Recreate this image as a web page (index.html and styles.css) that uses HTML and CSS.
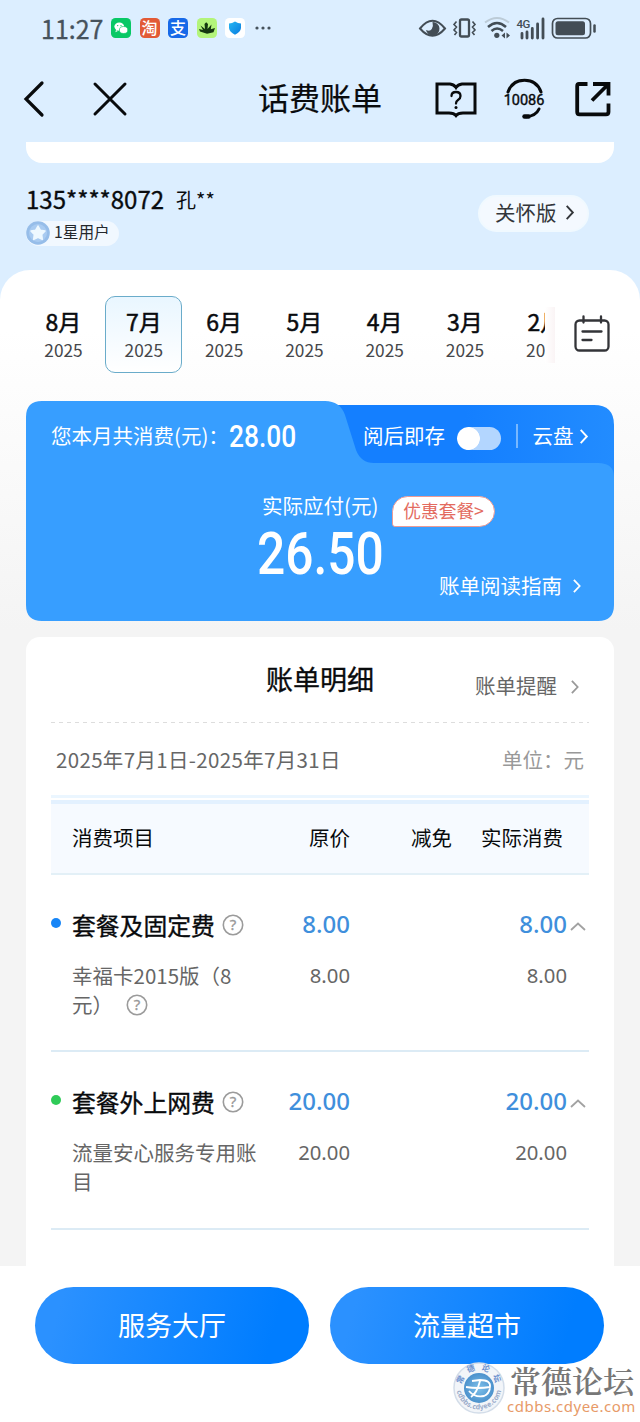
FILE: index.html
```html
<!DOCTYPE html>
<html lang="zh-CN">
<head>
<meta charset="utf-8">
<title>话费账单</title>
<link rel="stylesheet" href="styles.css">
</head>
<body>
<div class="page">
  <header class="status">
    <span class="clock">11:27</span>
    <div class="apps">
      <svg class="app" viewBox="0 0 20 20"><rect width="20" height="20" rx="4.5" fill="#08c865"/><ellipse cx="8.3" cy="8.6" rx="4.9" ry="4.2" fill="#fff"/><path d="M5 12l-.6 2.2 2.4-1.3z" fill="#fff"/><ellipse cx="12.6" cy="12" rx="4.2" ry="3.5" fill="#fff" stroke="#08c865" stroke-width=".7"/><circle cx="6.7" cy="7.6" r=".7" fill="#08c865"/><circle cx="10" cy="7.6" r=".7" fill="#08c865"/></svg>
      <span class="app app-tao">淘</span>
      <span class="app app-zhi">支</span>
      <svg class="app" viewBox="0 0 20 20"><rect width="20" height="20" rx="4.5" fill="#b3f47a"/><path d="M3 13.500L2 11l4 1-2.500-4.500L8 11l-.5-5 1.700-1.800L11 6l-.5 5 4-4.500-.7 4.800L18 10l-1.500 4.300-6.500 1.500z" fill="#14370f"/></svg>
      <svg class="app" viewBox="0 0 20 20"><defs><linearGradient id="shield" x2="1" y2="1"><stop stop-color="#29b8f2"/><stop offset="1" stop-color="#087be0"/></linearGradient></defs><rect width="20" height="20" rx="4.500" fill="#fff"/><path d="M10 3.500Q13 5.500 16 5.600V10Q15.500 14 10 16.800 4.500 14 4 10V5.600Q7 5.500 10 3.500z" fill="url(#shield)"/></svg>
    </div>
    <svg class="more" viewBox="0 0 16 4" fill="#46525c"><circle cx="2" cy="2" r="1.600"/><circle cx="8" cy="2" r="1.600"/><circle cx="14" cy="2" r="1.600"/></svg>
    <svg class="sys" viewBox="0 0 180 24" fill="none" stroke="#434d55">
      <path d="M1 12.500Q13.500-3 26 12.500 13.500 27 1 12.500z" stroke-width="2"/>
      <path d="M13.500 6a6.800 6.800 0 1 1-6.500 8q4 2 5.800-1t.7-7z" fill="#434d55" stroke="none"/>
      <rect x="41" y="3.500" width="9" height="17" rx="1.500" stroke-width="2.300"/>
      <path d="M37.500 5.500l-2.500 3 2.500 2.500-2.500 3 2.500 2.500-2 2.500M53.500 5.500l2.500 3-2.500 2.500 2.500 3-2.500 2.500 2 2.500" stroke-width="1.600"/>
      <path d="M66 6.500Q78-2.500 90 6.500" stroke="#bccbd7" stroke-width="2"/>
      <path d="M69 11Q78 3 87 11M72.500 15Q78 10 84 15" stroke-width="2.500"/>
      <circle cx="77.800" cy="19.300" r="2.600" fill="#434d55" stroke="none"/>
      <path d="M86 16.500l-3.500 3 3.500 3zM87.500 16.500l3.500 3-3.500 3z" fill="#434d55" stroke="none"/>
      <path d="M103 17.500V22M108 16V22M113.300 12.500V22M118.600 8V22M124 3V22" stroke-width="2.800" stroke-linecap="round"/>
      <text x="97.500" y="11.500" class="net">4G</text>
      <rect x="133.500" y="2.500" width="38" height="19.500" rx="5" stroke-width="1.700"/>
      <rect x="136.500" y="5.200" width="29.500" height="14" rx="2.500" fill="#434d55" stroke="none"/>
      <path d="M175.500 9.500v6" stroke-width="2.500" stroke-linecap="round"/>
    </svg>
  </header>

  <nav class="nav">
    <svg class="back" viewBox="0 0 20 36"><path d="M18 2L2 18l16 16" fill="none" stroke="#080a0c" stroke-width="3.200" stroke-linecap="round"/></svg>
    <svg class="close" viewBox="0 0 34 34"><path d="M2 2l30 30M32 2L2 32" stroke="#080a0c" stroke-width="3" stroke-linecap="round"/></svg>
    <h1 class="title">话费账单</h1>
    <svg class="book" viewBox="0 0 42 36" fill="none" stroke="#080a0c" stroke-width="3"><path d="M2 3H15Q19 3.500 21 6.500 23 3.500 27 3H40V32H28Q23 32 21 34.500 19 32 14 32H2z"/><path d="M16.500 15Q16.500 11 21 11T25.500 15Q25.500 17.500 23 19 21 20.300 21 22.500" stroke-width="2.300" stroke-linecap="round"/><circle cx="21" cy="26.500" r="1.500" fill="#080a0c" stroke="none"/></svg>
    <svg class="service" viewBox="0 0 42 42" fill="none" stroke="#080a0c" stroke-width="3"><path d="M4 14Q8 2.200 20.500 2.200T37 14M35 31Q32 38 22 38.700" stroke-linecap="round"/><path d="M20.500 38.500h4" stroke-width="4.500" stroke-linecap="round"/><text x="20" y="27" class="servnum">10086</text></svg>
    <svg class="share" viewBox="0 0 36 36" fill="none" stroke="#080a0c" stroke-width="3.800"><path d="M12.500 3H4Q2.200 3 2.200 5V31Q2.200 33.300 4.500 33.300H31Q33.500 33.300 33.500 31V22.500M18 3H33.500V14.500M33 3.500L17 19.500"/></svg>
  </nav>

  <div class="strip"></div>

  <section class="user">
    <div class="ident">
      <div class="phone">135****8072<span class="name">孔**</span></div>
      <div class="level"><svg class="star" viewBox="0 0 24 24"><circle cx="12" cy="12" r="11.800" fill="#96bde9"/><circle cx="12" cy="12" r="9" fill="#a9cbf1"/><path d="M12 5l2.300 4.200 4.700.9-3.300 3.500.6 4.800L12 16.400l-4.300 2 .6-4.800L5 10.100l4.700-.9z" fill="#eef8ff" stroke="#eef8ff" stroke-width="1.500" stroke-linejoin="round"/></svg><span>1星用户</span></div>
    </div>
    <div class="care">关怀版<svg class="chev" viewBox="0 0 10 18"><path d="M1.500 2L8 9l-6.500 7" fill="none" stroke="currentColor" stroke-width="2"/></svg></div>
  </section>

  <main class="sheet">
    <div class="months">
      <div class="track">
        <div class="month"><b>8月</b><span>2025</span></div>
        <div class="month on"><b>7月</b><span>2025</span></div>
        <div class="month"><b>6月</b><span>2025</span></div>
        <div class="month"><b>5月</b><span>2025</span></div>
        <div class="month"><b>4月</b><span>2025</span></div>
        <div class="month"><b>3月</b><span>2025</span></div>
        <div class="month"><b>2月</b><span>2025</span></div>
      </div>
      <div class="edge"></div>
      <svg class="cal" viewBox="0 0 36 38" fill="none" stroke="#333438" stroke-width="2.300" stroke-linecap="round"><rect x="1.500" y="5.500" width="33" height="30" rx="4"/><path d="M9.500 1.500v6M27 1.500v6M8.500 16.500h19M8.500 25h9"/></svg>
    </div>

    <section class="bill">
      <svg class="billbg" viewBox="0 0 588 220"><defs><linearGradient id="tab"><stop offset=".5" stop-color="#147fff"/><stop offset="1" stop-color="#228cff"/></linearGradient></defs>
        <path d="M290 4H568Q588 4 588 24V120H290z" fill="url(#tab)"/>
        <path d="M0 16Q0 0 16 0H299Q314 0 319 14L330 49Q335 62 348 62H572Q588 62 588 76V204Q588 220 572 220H16Q0 220 0 204z" fill="#379eff"/></svg>
      <div class="billtop">
        <span class="total">您本月共消费(元)：</span><span class="sum"><i>28.00</i></span>
        <span class="keep">阅后即存</span><span class="toggle"></span><span class="bar"></span>
        <span class="cloud">云盘</span><svg class="chev" viewBox="0 0 10 18"><path d="M1.500 2L8 9l-6.500 7" fill="none" stroke="currentColor" stroke-width="2"/></svg>
      </div>
      <div class="payrow"><span>实际应付(元)</span><span class="offer">优惠套餐&gt;</span></div>
      <div class="pay"><i>26.50</i></div>
      <div class="guide"><span>账单阅读指南</span><svg class="chev" viewBox="0 0 10 18"><path d="M1.500 2L8 9l-6.500 7" fill="none" stroke="currentColor" stroke-width="2"/></svg></div>
    </section>

    <section class="detail">
      <div class="dhead"><h2>账单明细</h2><span class="remind">账单提醒</span><svg class="chev" viewBox="0 0 10 18"><path d="M1.500 2L8 9l-6.500 7" fill="none" stroke="currentColor" stroke-width="2"/></svg></div>
      <div class="dash"></div>
      <div class="period"><span class="range">2025年7月1日-2025年7月31日</span><span class="unit">单位：元</span></div>
      <div class="stripe"></div>
      <div class="cols thead"><span>消费项目</span><span>原价</span><span>减免</span><span class="real">实际消费</span></div>
      <div class="group first">
        <div class="cols ghead"><span class="gname"><em class="dot"></em>套餐及固定费<svg class="help" viewBox="0 0 22 22"><circle cx="11" cy="11" r="9.700"/><text x="11" y="16.200">?</text></svg></span><b>8.00</b><b></b><b>8.00</b><svg class="up" viewBox="0 0 16 9"><path d="M1 8l7-6.500L15 8" fill="none" stroke="#a2a2a2" stroke-width="1.800"/></svg></div>
        <div class="cols item"><span>幸福卡2015版（8<br>元） <svg class="help inl" viewBox="0 0 22 22"><circle cx="11" cy="11" r="9.700"/><text x="11" y="16.200">?</text></svg></span><span>8.00</span><span></span><span>8.00</span></div>
      </div>
      <div class="group">
        <div class="cols ghead"><span class="gname"><em class="dot green"></em>套餐外上网费<svg class="help" viewBox="0 0 22 22"><circle cx="11" cy="11" r="9.700"/><text x="11" y="16.200">?</text></svg></span><b>20.00</b><b></b><b>20.00</b><svg class="up" viewBox="0 0 16 9"><path d="M1 8l7-6.500L15 8" fill="none" stroke="#a2a2a2" stroke-width="1.800"/></svg></div>
        <div class="cols item"><span>流量安心服务专用账<br>目</span><span>20.00</span><span></span><span>20.00</span></div>
      </div>
    </section>
  </main>

  <footer class="footer">
    <div class="btn">服务大厅</div>
    <div class="btn">流量超市</div>
    <div class="mark">
      <svg class="logo" viewBox="0 0 52 52"><defs><radialGradient id="orb"><stop stop-color="#7dc0ea"/><stop offset="1" stop-color="#4b91cc"/></radialGradient><path id="arcTop" d="M9 25a17 17 0 0 1 34 0"/><path id="arcBot" d="M3.500 25a22.500 22.500 0 0 0 45 0"/></defs>
        <circle cx="26" cy="26" r="25" fill="#f2f5f9" stroke="#d3dde9" stroke-width="1.500"/><circle cx="26" cy="26" r="15" fill="url(#orb)"/>
        <path d="M13 25Q25 27 37 25 38 18 27 18L19 19M27 19Q24 31 18 35M16 29Q22 36 31 34 36 32 37 26" fill="none" stroke="#fff" stroke-width="1.800"/>
        <text class="ring"><textPath href="#arcTop" startOffset="2">常德论坛</textPath></text>
        <text class="ring ringen"><textPath href="#arcBot" startOffset="4">cdbbs.cdyee.com</textPath></text></svg>
      <div class="words"><span class="forum">常德论坛</span><span class="site">cdbbs.cdyee.com</span></div>
    </div>
  </footer>
</div>
</body>
</html>
```
FILE: styles.css
```css
* { box-sizing: border-box; }
body { margin: 0; font-family: "Noto Sans CJK SC", sans-serif; color: #090b0e; }
svg { display: block; flex: none; overflow: visible; }
i, em { font-style: normal; }
.page { width: 640px; height: 1422px; overflow: hidden; background: #dceeff; white-space: nowrap; }

.status { display: flex; align-items: center; height: 56px; padding-left: 41px; color: #46525c; }
.clock { width: 70px; font-size: 25px; line-height: 30px; -webkit-text-stroke: .3px; }
.apps { display: flex; gap: 8.500px; }
.app { width: 20px; height: 20px; border-radius: 4.500px; color: #fff; font-size: 16px; line-height: 19px; font-weight: 500; text-align: center; }
.app-tao { background: #e25a36; }
.app-zhi { background: #1769e8; }
.more { width: 16px; height: 4px; margin-left: 10px; }
.sys { width: 180px; height: 24px; margin-left: 148px; }
.net { font: 500 11.500px "Roboto", sans-serif; fill: #434d55; stroke: none; letter-spacing: -.5px; }

.nav { display: flex; align-items: center; height: 86px; padding: 0 29px 0 24px; }
.back { width: 20px; height: 36px; }
.close { width: 34px; height: 34px; margin-left: 49px; }
.title { margin: 0 0 5px 131px; font-size: 31px; line-height: 40px; font-weight: 400; width: 124px; -webkit-text-stroke: .2px; }
.book { width: 42px; height: 36px; margin-left: 53px; }
.service { width: 42px; height: 42px; margin-left: 27px; }
.servnum { font: 400 14.500px "Roboto", sans-serif; fill: #080a0c; stroke: #080a0c; stroke-width: .4; text-anchor: middle; }
.share { width: 36px; height: 36px; margin-left: auto; }

.strip { height: 20.500px; margin: 0 26px; background: #fff; border-radius: 0 0 16px 16px; }
.user { display: flex; justify-content: space-between; height: 107.500px; padding: 18px 51px 0 26px; }
.phone { height: 36px; font-size: 24px; line-height: 36px; -webkit-text-stroke: .35px; }
.name { margin-left: 12px; font-size: 20px; position: relative; top: -1px; -webkit-text-stroke: 0; }
.level { display: flex; align-items: center; width: 93px; height: 25px; margin-top: 4px; border-radius: 13px; background: #f1f8ff; font-size: 15.700px; color: #24282d; }
.level span { line-height: 22px; margin-bottom: 2px; }
.star { width: 24px; height: 24px; margin-right: 4px; }
.care { display: flex; align-items: center; width: 111px; height: 37px; margin-top: 14.500px; padding: 0 0 3px 15px; border-radius: 19px; background: #f4f9ff; border: 2px solid #f0f9ff; color: #33363a; font-size: 20.500px; }
.chev { width: 10px; height: 18px; }
.care .chev { margin-left: 8px; height: 17px; }

.sheet { height: 996px; padding: 26px 26px 0; border-radius: 30px 30px 0 0; background: linear-gradient(#fff 60px, #f4f4f4 360px); }
.months { display: flex; align-items: center; height: 77px; margin-left: -2px; }
.track { display: flex; width: 521px; height: 77px; overflow: hidden; gap: 3.300px; padding-left: 1px; }
.month { flex: none; width: 77px; height: 77px; padding-top: 9px; display: flex; flex-direction: column; align-items: center; border: 1.500px solid transparent; border-radius: 10px; }
.month.on { border-color: #6aacca; background: linear-gradient(#e9f6ff, #fff); }
.month b { height: 30px; font-size: 23px; line-height: 30px; font-weight: 400; -webkit-text-stroke: .5px; }
.month span { margin-top: 3px; font-size: 17.300px; line-height: 22px; color: #45474a; }
.edge { width: 10px; height: 56px; background: linear-gradient(90deg, #fff, #faf4f5); }
.cal { width: 36px; height: 38px; margin: 0 0 2px 19px; }

.bill { position: relative; height: 220px; margin-top: 28px; color: #fff; font-size: 20.500px; }
.billbg { position: absolute; inset: 0; width: 588px; height: 220px; z-index: 0; }
.billtop, .payrow, .pay, .guide { position: relative; display: flex; align-items: center; }
.billtop { height: 70px; padding-left: 25px; }
.total, .keep, .cloud { margin-bottom: 2px; }
.total { width: 178px; }
.sum { width: 67px; margin-top: 2px; font: 500 31px/36px "Roboto", sans-serif; }
.sum i, .pay i { display: block; transform: scaleX(.85); transform-origin: 0 50%; }
.keep { margin-left: 67px; }
.toggle { width: 44px; height: 23px; margin: 5px 0 0 12px; border-radius: 12px; background: radial-gradient(circle at 11.500px 50%, #fff 11px, #b3d6ff 11.600px); }
.bar { width: 1.500px; height: 24px; margin: 0 15px 0 15px; background: #78b8ff; }
.billtop .chev { margin-left: 5px; height: 17px; }
.payrow { height: 30px; margin-top: 20px; padding-left: 236px; }
.payrow > span:first-child { line-height: 30px; margin-bottom: 2px; }
.offer { width: 103px; height: 31px; margin: 10px 0 0 14px; border: 1px solid #ec9b96; border-radius: 16px 16px 16px 3px; background: #fff; color: #e36b60; font-size: 17.700px; line-height: 27px; padding-left: 10px; }
.pay { height: 60px; margin: 3px 0 0 231px; font: 500 58.500px/60px "Roboto", sans-serif; }
.guide { height: 30px; margin: -13px 32px 0 0; justify-content: flex-end; }
.guide span { margin-bottom: 2px; }
.guide .chev { margin-left: 10px; height: 16px; }

.detail { height: 629px; margin-top: 16px; padding: 0 25px; border-radius: 14px 14px 0 0; background: #fff; color: #666; font-size: 20.500px; }
.dhead { display: flex; align-items: center; height: 85px; }
.dhead h2 { margin: 0 101px 2px 215px; font-size: 27px; line-height: 40px; font-weight: 400; color: #080a0c; -webkit-text-stroke: .35px; }
.remind { padding-top: 10px; line-height: 30px; }
.dhead .chev { margin: 14px 0 0 13px; height: 16px; color: #999; }
.dash { height: 1px; background: repeating-linear-gradient(90deg, #ddd 0 4px, transparent 4px 8px); }
.period { display: flex; justify-content: space-between; height: 72px; padding: 0 5px; line-height: 73px; }
.range { letter-spacing: .34px; }
.unit { color: #999; }
.stripe { height: 3px; margin-bottom: 2px; background: #ebf6ff; }
.cols { display: grid; grid-template-columns: 205px 94px 102px 115px 22px; }
.cols > :nth-child(2), .cols > :nth-child(3), .cols > :nth-child(4) { text-align: right; }
.thead { height: 75px; padding-left: 21px; grid-template-columns: 184px 94px 102px 111px; border-top: 4px solid #e3f1ff; border-bottom: 2px solid #e3f0f7; background: #f6faff; color: #080a0c; line-height: 67px; }
.group { height: 178px; padding-top: 32px; border-bottom: 2px solid #dcebf5; }
.group.first { height: 177px; }
.ghead { align-items: center; height: 36px; line-height: 36px; }
.gname { display: flex; align-items: center; color: #080a0c; font-size: 23.800px; -webkit-text-stroke: .35px; }
.dot { width: 10px; height: 10px; margin: -5px 11px 0 0; border-radius: 50%; background: #1785f7; }
.dot.green { background: #2fcb58; }
.ghead b { height: 36px; line-height: 33px; font-family: "Noto Sans", sans-serif; font-size: 24px; font-weight: 500; color: #3f8fdc; }
.help { width: 22px; height: 22px; margin-left: 7px; fill: none; stroke: #9b9b9b; stroke-width: 1.600; }
.help text { font: 15px "Noto Sans", sans-serif; fill: #999; stroke: #999; stroke-width: .3; text-anchor: middle; }
.help.inl { display: inline-block; vertical-align: -3px; margin-left: 8px; }
.up { width: 16px; height: 9px; margin: 3px 0 0 3px; }
.item { margin-top: 18px; line-height: 28.500px; }
.item > span:first-child { padding-left: 21px; }
.item > span:not(:first-child) { font-family: "Noto Sans", sans-serif; font-size: 20.300px; }

.footer { position: relative; display: flex; gap: 21px; height: 156px; padding: 21px 35px; background: #fff; }
.btn { width: 274px; height: 77px; border-radius: 39px; background: linear-gradient(105deg, #2b91ff 10%, #007dff 85%); color: #fff; font-size: 27px; line-height: 75px; text-align: center; }
.mark { position: absolute; left: 453px; top: 96px; display: flex; }
.logo { width: 52px; height: 52px; }
.ring { font-size: 8px; font-weight: 700; fill: #6c91ce; letter-spacing: 5px; }
.ringen { font-size: 7px; fill: #98aac9; letter-spacing: .2px; }
.words { display: flex; flex-direction: column; margin-left: 2px; }
.forum { padding-left: 3px; font-family: "AR PL UKai CN", "KaiTi", "Noto Serif CJK SC", "Noto Sans CJK SC", serif; font-size: 31px; line-height: 36px; font-weight: 600; color: #777; text-shadow: 0 0 2px #fff, 0 0 2px #fff; }
.site { height: 17px; font-family: "Noto Sans", sans-serif; font-size: 15px; line-height: 17px; color: #e79a68; letter-spacing: .5px; }
```
